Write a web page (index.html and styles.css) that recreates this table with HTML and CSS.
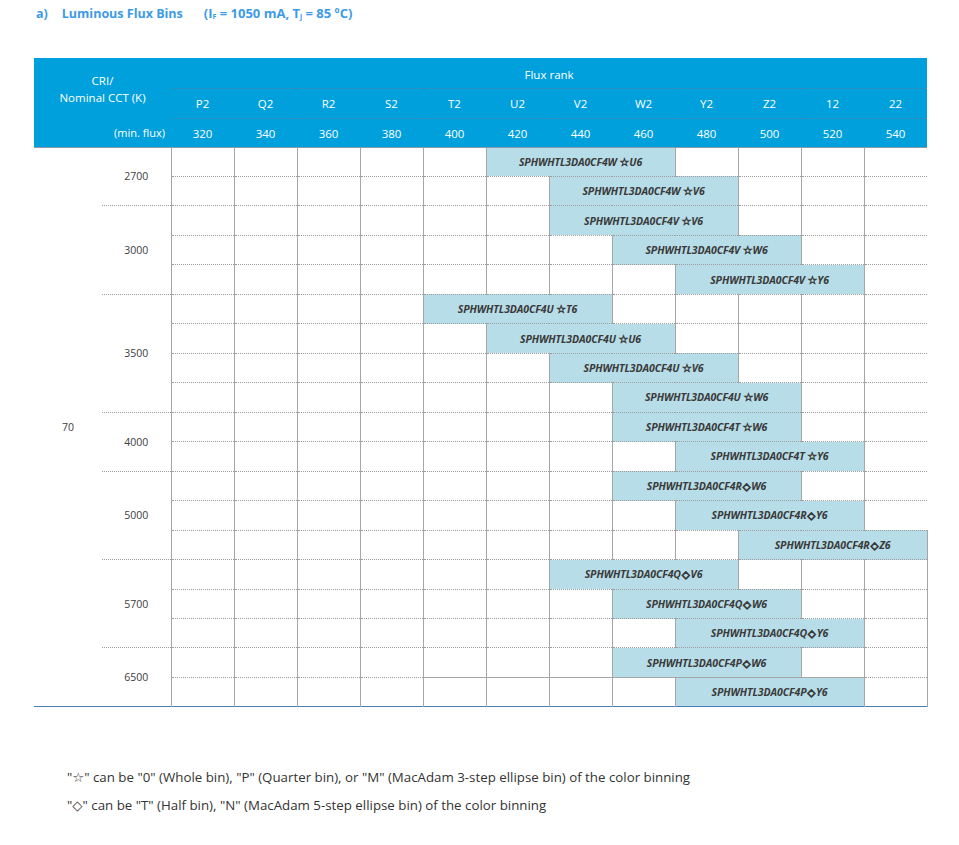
FILE: index.html
```html
<!DOCTYPE html>
<html lang="en">
<head>
<meta charset="utf-8">
<title>Luminous Flux Bins</title>
<link rel="stylesheet" href="styles.css">
</head>
<body>
<div class="page">
  <h1 class="title"><span class="t-a">a)</span><span class="t-main">Luminous Flux Bins</span><span class="t-cond">(I<sub>F</sub> = 1050 mA, T<sub>j</sub> = 85 ºC)</span></h1>

  <table class="bins">
    <colgroup>
      <col class="c-cri"><col class="c-cct">
      <col class="c-g"><col class="c-g"><col class="c-g"><col class="c-g"><col class="c-g"><col class="c-g">
      <col class="c-g"><col class="c-g"><col class="c-g"><col class="c-g"><col class="c-g"><col class="c-g">
    </colgroup>
    <thead>
      <tr class="h1">
        <th class="h-cri" colspan="2" rowspan="2">CRI/<br>Nominal CCT (K)</th>
        <th class="h-rank" colspan="12">Flux rank</th>
      </tr>
      <tr class="h2">
        <th>P2</th><th>Q2</th><th>R2</th><th>S2</th><th>T2</th><th>U2</th><th>V2</th><th>W2</th><th>Y2</th><th>Z2</th><th>12</th><th>22</th>
      </tr>
      <tr class="h3">
        <th class="h-min" colspan="2">(min. flux)</th>
        <th>320</th><th>340</th><th>360</th><th>380</th><th>400</th><th>420</th><th>440</th><th>460</th><th>480</th><th>500</th><th>520</th><th>540</th>
      </tr>
    </thead>
    <tbody>
      <tr>
        <td class="cri" rowspan="19">70</td>
        <td class="cct" rowspan="2">2700</td>
        <td class="g"></td><td class="g"></td><td class="g"></td><td class="g"></td><td class="g"></td>
        <td class="g bar" colspan="3">SPHWHTL3DA0CF4W <span class="sym">☆</span>U6</td>
        <td class="g"></td><td class="g"></td><td class="g"></td><td class="g"></td>
      </tr>
      <tr>
        <td class="g"></td><td class="g"></td><td class="g"></td><td class="g"></td><td class="g"></td><td class="g"></td>
        <td class="g bar" colspan="3">SPHWHTL3DA0CF4W <span class="sym">☆</span>V6</td>
        <td class="g"></td><td class="g"></td><td class="g"></td>
      </tr>
      <tr>
        <td class="cct" rowspan="3">3000</td>
        <td class="g"></td><td class="g"></td><td class="g"></td><td class="g"></td><td class="g"></td><td class="g"></td>
        <td class="g bar" colspan="3">SPHWHTL3DA0CF4V <span class="sym">☆</span>V6</td>
        <td class="g"></td><td class="g"></td><td class="g"></td>
      </tr>
      <tr>
        <td class="g"></td><td class="g"></td><td class="g"></td><td class="g"></td><td class="g"></td><td class="g"></td><td class="g"></td>
        <td class="g bar" colspan="3">SPHWHTL3DA0CF4V <span class="sym">☆</span>W6</td>
        <td class="g"></td><td class="g"></td>
      </tr>
      <tr>
        <td class="g"></td><td class="g"></td><td class="g"></td><td class="g"></td><td class="g"></td><td class="g"></td><td class="g"></td><td class="g"></td>
        <td class="g bar" colspan="3">SPHWHTL3DA0CF4V <span class="sym">☆</span>Y6</td>
        <td class="g"></td>
      </tr>
      <tr>
        <td class="cct" rowspan="4">3500</td>
        <td class="g"></td><td class="g"></td><td class="g"></td><td class="g"></td>
        <td class="g bar" colspan="3">SPHWHTL3DA0CF4U <span class="sym">☆</span>T6</td>
        <td class="g"></td><td class="g"></td><td class="g"></td><td class="g"></td><td class="g"></td>
      </tr>
      <tr>
        <td class="g"></td><td class="g"></td><td class="g"></td><td class="g"></td><td class="g"></td>
        <td class="g bar" colspan="3">SPHWHTL3DA0CF4U <span class="sym">☆</span>U6</td>
        <td class="g"></td><td class="g"></td><td class="g"></td><td class="g"></td>
      </tr>
      <tr>
        <td class="g"></td><td class="g"></td><td class="g"></td><td class="g"></td><td class="g"></td><td class="g"></td>
        <td class="g bar" colspan="3">SPHWHTL3DA0CF4U <span class="sym">☆</span>V6</td>
        <td class="g"></td><td class="g"></td><td class="g"></td>
      </tr>
      <tr>
        <td class="g"></td><td class="g"></td><td class="g"></td><td class="g"></td><td class="g"></td><td class="g"></td><td class="g"></td>
        <td class="g bar" colspan="3">SPHWHTL3DA0CF4U <span class="sym">☆</span>W6</td>
        <td class="g"></td><td class="g"></td>
      </tr>
      <tr>
        <td class="cct" rowspan="2">4000</td>
        <td class="g"></td><td class="g"></td><td class="g"></td><td class="g"></td><td class="g"></td><td class="g"></td><td class="g"></td>
        <td class="g bar" colspan="3">SPHWHTL3DA0CF4T <span class="sym">☆</span>W6</td>
        <td class="g"></td><td class="g"></td>
      </tr>
      <tr>
        <td class="g"></td><td class="g"></td><td class="g"></td><td class="g"></td><td class="g"></td><td class="g"></td><td class="g"></td><td class="g"></td>
        <td class="g bar" colspan="3">SPHWHTL3DA0CF4T <span class="sym">☆</span>Y6</td>
        <td class="g"></td>
      </tr>
      <tr>
        <td class="cct" rowspan="3">5000</td>
        <td class="g"></td><td class="g"></td><td class="g"></td><td class="g"></td><td class="g"></td><td class="g"></td><td class="g"></td>
        <td class="g bar" colspan="3">SPHWHTL3DA0CF4R<span class="sym dia">◇</span>W6</td>
        <td class="g"></td><td class="g"></td>
      </tr>
      <tr>
        <td class="g"></td><td class="g"></td><td class="g"></td><td class="g"></td><td class="g"></td><td class="g"></td><td class="g"></td><td class="g"></td>
        <td class="g bar" colspan="3">SPHWHTL3DA0CF4R<span class="sym dia">◇</span>Y6</td>
        <td class="g"></td>
      </tr>
      <tr>
        <td class="g"></td><td class="g"></td><td class="g"></td><td class="g"></td><td class="g"></td><td class="g"></td><td class="g"></td><td class="g"></td><td class="g"></td>
        <td class="g bar last" colspan="3">SPHWHTL3DA0CF4R<span class="sym dia">◇</span>Z6</td>
      </tr>
      <tr>
        <td class="cct" rowspan="3">5700</td>
        <td class="g"></td><td class="g"></td><td class="g"></td><td class="g"></td><td class="g"></td><td class="g"></td>
        <td class="g bar" colspan="3">SPHWHTL3DA0CF4Q<span class="sym dia">◇</span>V6</td>
        <td class="g"></td><td class="g"></td><td class="g last"></td>
      </tr>
      <tr>
        <td class="g"></td><td class="g"></td><td class="g"></td><td class="g"></td><td class="g"></td><td class="g"></td><td class="g"></td>
        <td class="g bar" colspan="3">SPHWHTL3DA0CF4Q<span class="sym dia">◇</span>W6</td>
        <td class="g"></td><td class="g last"></td>
      </tr>
      <tr>
        <td class="g"></td><td class="g"></td><td class="g"></td><td class="g"></td><td class="g"></td><td class="g"></td><td class="g"></td><td class="g"></td>
        <td class="g bar" colspan="3">SPHWHTL3DA0CF4Q<span class="sym dia">◇</span>Y6</td>
        <td class="g last"></td>
      </tr>
      <tr>
        <td class="cct" rowspan="2">6500</td>
        <td class="g"></td><td class="g"></td><td class="g"></td><td class="g"></td>
        <td class="g solid"></td><td class="g solid"></td><td class="g solid"></td>
        <td class="g bar solid" colspan="3">SPHWHTL3DA0CF4P<span class="sym dia">◇</span>W6</td>
        <td class="g solid"></td><td class="g last"></td>
      </tr>
      <tr>
        <td class="g"></td><td class="g"></td><td class="g"></td><td class="g"></td><td class="g"></td><td class="g"></td><td class="g"></td><td class="g"></td>
        <td class="g bar" colspan="3">SPHWHTL3DA0CF4P<span class="sym dia">◇</span>Y6</td>
        <td class="g last"></td>
      </tr>
    </tbody>
  </table>

  <div class="notes">
    <p>"☆" can be "0" (Whole bin), "P" (Quarter bin), or "M" (MacAdam 3-step ellipse bin) of the color binning</p>
    <p>"◇" can be "T" (Half bin), "N" (MacAdam 5-step ellipse bin) of the color binning</p>
  </div>
</div>
</body>
</html>
```

FILE: styles.css
```css
* { box-sizing: border-box; }

body {
  margin: 0;
  background: #ffffff;
  font-family: "Open Sans", "DejaVu Sans", sans-serif;
  color: #404040;
}

.page {
  padding: 4px 0 0 34px;
}

.title {
  margin: 0;
  padding-left: 2px;
  height: 18px;
  line-height: 18px;
  font-size: 12.5px;
  font-weight: bold;
  color: #3d9be6;
  white-space: nowrap;
}

.title sub {
  font-size: 7px;
  vertical-align: -1px;
  line-height: 0;
}

.t-main { margin-left: 14px; }
.t-cond { margin-left: 21px; font-size: 13px; }

.bins {
  margin-top: 36px;
  width: 893px;
  table-layout: fixed;
  border-collapse: collapse;
  border-bottom: 1px solid #4d7db4;
}

.c-cri { width: 68px; }
.c-cct { width: 69px; }
.c-g { width: 63px; }

.bins th {
  background: #00a0dc;
  color: #ffffff;
  font-weight: normal;
  font-size: 11.5px;
  padding: 0;
  text-align: center;
  vertical-align: middle;
}

.h1 { height: 30px; }
.h2 { height: 30px; }
.h3 { height: 29px; }

.h-cri {
  font-size: 11px;
  line-height: 17px;
  padding-top: 2px !important;
}

.h-rank {
  border-bottom: 1px dotted #4a86ac;
  vertical-align: top;
  padding-top: 3px !important;
}

.h2 th {
  border-bottom: 1px dotted #4a86ac;
}

.h2 th, .h3 th { padding-top: 1px; }

.h3 th { border-bottom: 1px solid #8a9aa6; }

.bins th.h-min {
  text-align: right;
  padding-right: 6px;
  font-size: 11px;
}

.bins tbody tr { height: 29.47px; }

.bins td {
  padding: 0;
  font-size: 10.5px;
  text-align: center;
  vertical-align: middle;
}

.cri {
  color: #404040;
}

.cct {
  border-bottom: 1px dotted #9c9c9c;
  padding-top: 1px;
}

.g {
  border-left: 1px solid #a6a6a6;
  border-bottom: 1px dotted #9c9c9c;
}

.g.solid { border-bottom: 1px solid #a6a6a6; }

.g.last { border-right: 1px solid #a6a6a6; }

.bins td.bar {
  background: #b7dde8;
  font-size: 10.5px;
  font-weight: bold;
  font-style: italic;
  color: #3a3a3a;
  white-space: nowrap;
  letter-spacing: -0.1px;
}

.sym {
  font-family: "DejaVu Sans", sans-serif;
  font-style: normal;
  font-weight: bold;
  font-size: 11px;
  color: #3a3a3a;
  -webkit-text-stroke: 0.6px #3a3a3a;
}

.sym.dia {
  font-size: 10px;
  margin: 0 1px;
  -webkit-text-stroke: 1px #3a3a3a;
}

.notes {
  margin-top: 60px;
  padding-left: 33px;
  font-size: 13.3px;
  color: #333333;
}

.notes p {
  margin: 0;
  height: 28px;
  line-height: 20px;
  white-space: nowrap;
}
```
